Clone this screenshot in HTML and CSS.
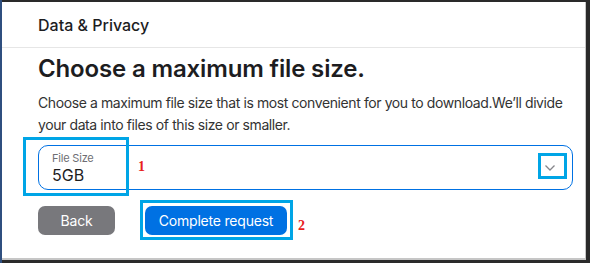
FILE: index.html
```html
<!DOCTYPE html>
<html lang="en">
<head>
    <meta charset="UTF-8">
    <meta name="viewport" content="width=device-width, initial-scale=1.0">
    <title>Data &amp; Privacy</title>
    <link rel="stylesheet" href="styles.css">
</head>
<body>
    <div class="dialog">
        <div class="dialog-header">Data &amp; Privacy</div>
        <div class="dialog-body">
            <h2>Choose a maximum file size.</h2>
            <p class="intro">Choose a maximum file size that is most convenient for you to download.We’ll divide<br>your data into files of this size or smaller.</p>

            <div class="select-box">
                <div class="select-value">
                    <span class="select-label">File Size</span>
                    <span class="select-text">5GB</span>
                </div>
                <svg class="chevron" width="12" height="8" viewBox="0 0 12 8">
                    <path d="M1.5 1.5 L6 6 L10.5 1.5" fill="none" stroke="#86868b" stroke-width="1.3"/>
                </svg>
            </div>

            <div class="actions">
                <button class="btn btn-back">Back</button>
                <button class="btn btn-primary">Complete request</button>
            </div>

            <!-- annotation marks drawn over the dialog -->
            <span class="mark mark-field"></span>
            <span class="mark mark-chevron"></span>
            <span class="mark mark-button"></span>
            <span class="step step-1">1</span>
            <span class="step step-2">2</span>
        </div>
    </div>
</body>
</html>
```

FILE: styles.css
```css
/* Page frame */
body {
    margin: 0;
    height: 263px;
    overflow: hidden;
    background: linear-gradient(to right, #2f4f7f 0, #2f4f7f 2px, #2a2a2a 2px);
    font-family: Inter, "Noto Sans", Arial, sans-serif;
}
.dialog {
    position: relative;
    margin: 2px 0 0 2px;
    width: 583px;
    height: 256px;
    background-color: #fff;
    border-right: 1px solid #c6c6c6;
    border-bottom: 2px solid #c6c6c6;
}
.dialog-header {
    height: 45px;
    padding-left: 36px;
    display: flex;
    align-items: center;
    border-bottom: 1px solid #e6e6e6;
    font-size: 16px;
    font-weight: 500;
    color: #1d1d1f;
}
.dialog-body {
    padding: 0 10px 0 36px;
}
h2 {
    margin: 6px 0 0;
    font-size: 24px;
    line-height: 30px;
    font-weight: 600;
    color: #1d1d1f;
    letter-spacing: -0.15px;
}
.intro {
    margin: 8px 0 0;
    font-size: 14px;
    line-height: 22px;
    color: #333;
    letter-spacing: -0.4px;
}
/* Select field */
.select-box {
    margin-top: 9px;
    width: 533px;
    height: 43px;
    border: 1px solid #0071e3;
    border-radius: 10px;
    display: flex;
    align-items: center;
    justify-content: space-between;
}
.select-value {
    display: flex;
    flex-direction: column;
    padding-left: 13px;
}
.select-label {
    font-size: 11px;
    color: #6e6e73;
    line-height: 14px;
    letter-spacing: -0.2px;
}
.select-text {
    font-size: 16px;
    color: #1d1d1f;
    line-height: 20px;
}
.chevron {
    margin-right: 16px;
}
/* Buttons */
.actions {
    display: flex;
    gap: 30px;
    margin-top: 16px;
}
.btn {
    border: none;
    border-radius: 7px;
    color: #fff;
    font-family: inherit;
    font-size: 14px;
    letter-spacing: -0.2px;
    height: 29px;
    padding: 0;
    cursor: pointer;
}
.btn-back {
    width: 77px;
    background-color: #78787c;
}
.btn-primary {
    width: 142px;
    background-color: #0071e3;
}
/* Annotation overlays */
.mark {
    position: absolute;
    border: 3px solid #00a5e6;
}
.mark-field {
    left: 21px;
    top: 135px;
    width: 100px;
    height: 53px;
}
.mark-chevron {
    left: 536px;
    top: 151px;
    width: 23px;
    height: 20px;
}
.mark-button {
    left: 138px;
    top: 198px;
    width: 147px;
    height: 34px;
}
.step {
    position: absolute;
    font-family: "Liberation Serif", "DejaVu Serif", serif;
    font-weight: bold;
    font-size: 14px;
    color: #e8201c;
}
.step-1 {
    left: 136px;
    top: 157px;
}
.step-2 {
    left: 296px;
    top: 216px;
}
```
